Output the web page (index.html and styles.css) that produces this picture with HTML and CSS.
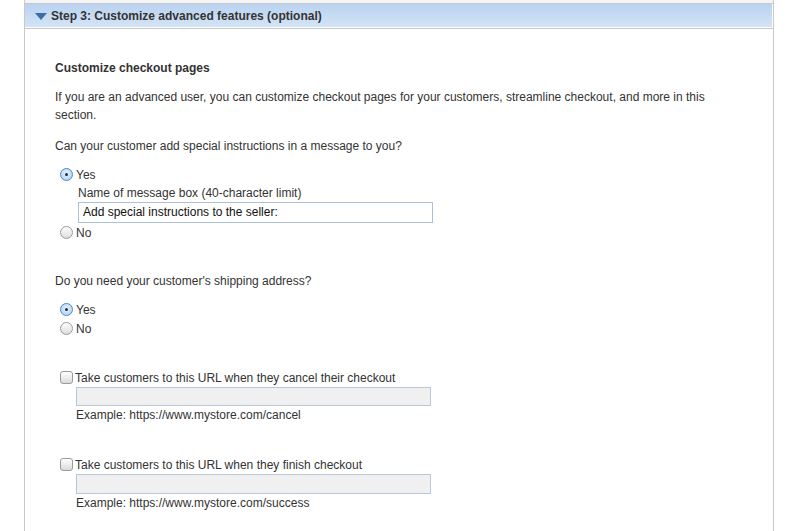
FILE: index.html
```html
<!DOCTYPE html>
<html>
<head>
<meta charset="utf-8">
<link rel="stylesheet" href="styles.css">
</head>
<body>
<div class="panel">
  <div class="prev-strip"></div>
  <div class="step-header">
    <svg class="caret" width="12" height="7" viewBox="0 0 12 7"><polygon points="0,0 12,0 6,7" fill="#3a6ea6"/></svg>
    <span class="step-title">Step 3: Customize advanced features (optional)</span>
  </div>
  <div class="content">
    <div class="heading">Customize checkout pages</div>
    <p class="intro">If you are an advanced user, you can customize checkout pages for your customers, streamline checkout, and more in this section.</p>

    <div class="question">Can your customer add special instructions in a message to you?</div>
    <div class="options">
      <label class="opt"><span class="radio on"></span>Yes</label>
      <div class="sub">
        <div class="sub-label">Name of message box (40-character limit)</div>
        <div class="field">Add special instructions to the seller:</div>
      </div>
      <label class="opt"><span class="radio"></span>No</label>
    </div>

    <div class="question q2">Do you need your customer's shipping address?</div>
    <div class="options">
      <label class="opt"><span class="radio on"></span>Yes</label>
      <label class="opt"><span class="radio"></span>No</label>
    </div>

    <div class="url-block first">
      <label class="opt check-opt"><span class="checkbox"></span>Take customers to this URL when they cancel their checkout</label>
      <div class="sub sub-url">
        <div class="field disabled"></div>
        <div class="example">Example: https://www.mystore.com/cancel</div>
      </div>
    </div>

    <div class="url-block second">
      <label class="opt check-opt"><span class="checkbox"></span>Take customers to this URL when they finish checkout</label>
      <div class="sub sub-url">
        <div class="field disabled tall"></div>
        <div class="example">Example: https://www.mystore.com/success</div>
      </div>
    </div>
  </div>
</div>
</body>
</html>
```

FILE: styles.css
```css
html, body {
  margin: 0;
  padding: 0;
  background: #ffffff;
}

body {
  font-family: "Liberation Sans", Arial, sans-serif;
  font-size: 12px;
  line-height: 18px;
  color: #333333;
}

.panel {
  margin-left: 24px;
  width: 748px;
  border-left: 1px solid #c9c9c9;
  border-right: 1px solid #c9c9c9;
  height: 531px;
  overflow: hidden;
}

.prev-strip {
  height: 3px;
  background: #f2f4f5;
  border-bottom: 1px solid #c8c8c8;
}

.step-header {
  height: 23px;
  display: flex;
  align-items: center;
  padding-left: 10px;
  background: linear-gradient(#bad2f0, #d3e4f5);
  border-right: 1px solid #ffffff;
  border-bottom: 1px solid #ffffff;
  box-shadow: 0 1px 0 #c8c8c8;
  margin-bottom: 1px;
}

.caret {
  display: block;
  margin-right: 4px;
  margin-top: 1px;
}

.step-title {
  font-weight: bold;
  color: #333333;
}

.content {
  padding: 30px 30px 0 30px;
}

.heading {
  font-weight: bold;
}

.intro {
  margin: 11px 0 13px 0;
  padding-right: 10px;
}

.question {
  margin: 0;
}

.q2 {
  margin-top: 30px;
}

.options {
  margin-top: 10px;
}

.opt {
  display: flex;
  align-items: center;
  height: 19px;
  margin-left: 5px;
}

.radio {
  width: 11px;
  height: 11px;
  border-radius: 50%;
  border: 1px solid #9a9a9a;
  background: linear-gradient(#ffffff, #dcdcdc);
  margin-right: 3px;
  position: relative;
  box-sizing: content-box;
}

.radio.on {
  border-color: #4a86c5;
  background: radial-gradient(circle at 50% 40%, #e6f2fd, #a9cdef);
}

.radio.on::after {
  content: "";
  position: absolute;
  left: 4px;
  top: 4px;
  width: 3px;
  height: 3px;
  border-radius: 50%;
  background: #1d2f45;
}

.check-opt {
  margin-left: 6px;
}

.checkbox {
  width: 11px;
  height: 11px;
  border: 1px solid #9a9a9a;
  border-radius: 3px;
  background: linear-gradient(#ffffff, #dadada);
  margin-right: 2px;
  margin-left: -1px;
}

.sub {
  margin-left: 23px;
}

.sub-label {
  margin-left: 0;
}

.field {
  width: 355px;
  height: 21px;
  box-sizing: border-box;
  border: 1px solid #a9c0d8;
  background: #ffffff;
  padding-left: 4px;
  line-height: 19px;
  color: #111111;
}

.field.disabled {
  background: #f0f0f0;
  border-color: #b6c8da;
  height: 19px;
}

.field.disabled.tall {
  height: 20px;
}

.url-block.first {
  margin-top: 30px;
}

.url-block.second {
  margin-top: 31px;
}

.sub-url {
  margin-left: 21px;
}

.example {
  margin: 0;
}
```
